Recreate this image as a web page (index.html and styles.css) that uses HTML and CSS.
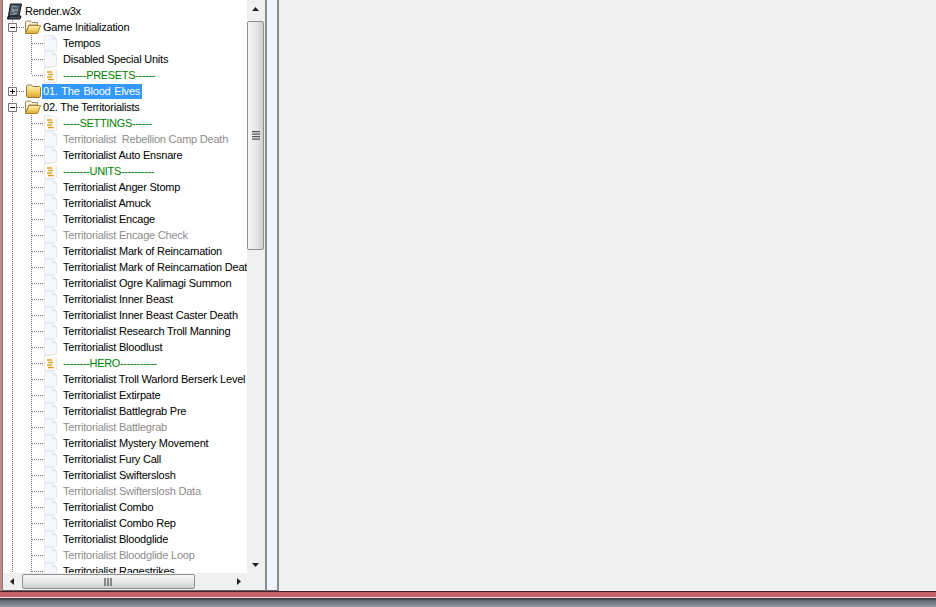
FILE: index.html
```html
<!DOCTYPE html>
<html lang="en">
<head>
<meta charset="utf-8">
<title>Render.w3x</title>
<link rel="stylesheet" href="styles.css">
</head>
<body>
<svg class="defs" width="0" height="0" aria-hidden="true">
  <defs>
    <linearGradient id="gold" x1="0" y1="0" x2="0" y2="1"><stop offset="0" stop-color="#fdf3bd"/><stop offset=".5" stop-color="#f4d467"/><stop offset="1" stop-color="#d9a42a"/></linearGradient>
  </defs>
  <symbol id="doc" viewBox="0 0 15 16"><path d="M.5 .5H9L12.500 4V15.500H.5Z" fill="#f6f8fc" stroke="#e6eaf1"/><path d="M9 .5V4H12.500" fill="#e9edf4" stroke="#dde2ea"/></symbol>
  <symbol id="note" viewBox="0 0 15 16"><path d="M.5 .5H9L12.500 4V15.500H.5Z" fill="#fdfdf8" stroke="#e6e8ec"/><path d="M3 5H8M4 7.500H9M3 10H8M4 12.500H10" stroke="#d9a520" stroke-width="1.400" fill="none"/></symbol>
  <symbol id="folder" viewBox="0 0 18 16"><path d="M2.500 4V3L3.500 2H7.500L9 3.500H15.500L16.500 4.500V13.500L15.500 14.500H3.500L2.500 13.500Z" fill="url(#gold)" stroke="#8f7a42"/></symbol>
  <symbol id="folder-open" viewBox="0 0 18 16"><path d="M1.500 14V3L2.500 2H6.500L8 3.500H13.500V6H5L1.500 14Z" fill="#f6f1de" stroke="#9c8a58"/><path d="M5 6.500H16.500L13.500 14.500H1.500Z" fill="url(#gold)" stroke="#a6852f"/></symbol>
  <symbol id="minus" viewBox="0 0 9 9"><path d="M.5 .5H8.500V8.500H.5Z" fill="#fff" stroke="#777"/><path d="M2 4.500H7" stroke="#000"/></symbol>
  <symbol id="plus" viewBox="0 0 9 9"><path d="M.5 .5H8.500V8.500H.5Z" fill="#fff" stroke="#777"/><path d="M2 4.500H7M4.500 2V7" stroke="#000"/></symbol>
  <symbol id="map" viewBox="0 0 17 17"><path d="M4.500 1H15.500L13 13H15L14 16H1.500L2.500 12.500Z" fill="#4a5560" stroke="#111"/><path d="M5.500 3L12 4M5 6L11.500 8M4.500 9L12 6M4 12L11 10M6 4L9 12" stroke="#98a4ac" stroke-width=".9" fill="none"/><path d="M1.500 16L3 13H12.500" stroke="#000" fill="none"/></symbol>
</svg>
<div class="main">
  <div class="edge"></div>
  <div class="pane">
    <div class="view">
      <div class="tree">
        <div class="row root"><svg class="i-map"><use href="#map"/></svg><span class="t">Render.w3x</span></div>
        <div class="row cat"><svg class="exp"><use href="#minus"/></svg><svg class="i-folder"><use href="#folder-open"/></svg><span class="t">Game Initialization</span></div>
        <div class="row leaf"><svg class="i-leaf"><use href="#doc"/></svg><span class="t">Tempos</span></div>
        <div class="row leaf"><svg class="i-leaf"><use href="#doc"/></svg><span class="t">Disabled Special Units</span></div>
        <div class="row leaf last"><svg class="i-leaf"><use href="#note"/></svg><span class="t green">-------PRESETS------</span></div>
        <div class="row cat closed"><svg class="exp"><use href="#plus"/></svg><svg class="i-folder"><use href="#folder"/></svg><span class="t sel">01. The Blood Elves</span></div>
        <div class="row cat"><svg class="exp"><use href="#minus"/></svg><svg class="i-folder"><use href="#folder-open"/></svg><span class="t">02. The Territorialists</span></div>
        <div class="row leaf"><svg class="i-leaf"><use href="#note"/></svg><span class="t green">-----SETTINGS------</span></div>
        <div class="row leaf"><svg class="i-leaf"><use href="#doc"/></svg><span class="t off">Territorialist&nbsp; Rebellion Camp Death</span></div>
        <div class="row leaf"><svg class="i-leaf"><use href="#doc"/></svg><span class="t">Territorialist Auto Ensnare</span></div>
        <div class="row leaf"><svg class="i-leaf"><use href="#note"/></svg><span class="t green">--------UNITS----------</span></div>
        <div class="row leaf"><svg class="i-leaf"><use href="#doc"/></svg><span class="t">Territorialist Anger Stomp</span></div>
        <div class="row leaf"><svg class="i-leaf"><use href="#doc"/></svg><span class="t">Territorialist Amuck</span></div>
        <div class="row leaf"><svg class="i-leaf"><use href="#doc"/></svg><span class="t">Territorialist Encage</span></div>
        <div class="row leaf"><svg class="i-leaf"><use href="#doc"/></svg><span class="t off">Territorialist Encage Check</span></div>
        <div class="row leaf"><svg class="i-leaf"><use href="#doc"/></svg><span class="t">Territorialist Mark of Reincarnation</span></div>
        <div class="row leaf"><svg class="i-leaf"><use href="#doc"/></svg><span class="t">Territorialist Mark of Reincarnation Death</span></div>
        <div class="row leaf"><svg class="i-leaf"><use href="#doc"/></svg><span class="t">Territorialist Ogre Kalimagi Summon</span></div>
        <div class="row leaf"><svg class="i-leaf"><use href="#doc"/></svg><span class="t">Territorialist Inner Beast</span></div>
        <div class="row leaf"><svg class="i-leaf"><use href="#doc"/></svg><span class="t">Territorialist Inner Beast Caster Death</span></div>
        <div class="row leaf"><svg class="i-leaf"><use href="#doc"/></svg><span class="t">Territorialist Research Troll Manning</span></div>
        <div class="row leaf"><svg class="i-leaf"><use href="#doc"/></svg><span class="t">Territorialist Bloodlust</span></div>
        <div class="row leaf"><svg class="i-leaf"><use href="#note"/></svg><span class="t green">--------HERO-----------</span></div>
        <div class="row leaf"><svg class="i-leaf"><use href="#doc"/></svg><span class="t">Territorialist Troll Warlord Berserk Level</span></div>
        <div class="row leaf"><svg class="i-leaf"><use href="#doc"/></svg><span class="t">Territorialist Extirpate</span></div>
        <div class="row leaf"><svg class="i-leaf"><use href="#doc"/></svg><span class="t">Territorialist Battlegrab Pre</span></div>
        <div class="row leaf"><svg class="i-leaf"><use href="#doc"/></svg><span class="t off">Territorialist Battlegrab</span></div>
        <div class="row leaf"><svg class="i-leaf"><use href="#doc"/></svg><span class="t">Territorialist Mystery Movement</span></div>
        <div class="row leaf"><svg class="i-leaf"><use href="#doc"/></svg><span class="t">Territorialist Fury Call</span></div>
        <div class="row leaf"><svg class="i-leaf"><use href="#doc"/></svg><span class="t">Territorialist Swifterslosh</span></div>
        <div class="row leaf"><svg class="i-leaf"><use href="#doc"/></svg><span class="t off">Territorialist Swifterslosh Data</span></div>
        <div class="row leaf"><svg class="i-leaf"><use href="#doc"/></svg><span class="t">Territorialist Combo</span></div>
        <div class="row leaf"><svg class="i-leaf"><use href="#doc"/></svg><span class="t">Territorialist Combo Rep</span></div>
        <div class="row leaf"><svg class="i-leaf"><use href="#doc"/></svg><span class="t">Territorialist Bloodglide</span></div>
        <div class="row leaf"><svg class="i-leaf"><use href="#doc"/></svg><span class="t off">Territorialist Bloodglide Loop</span></div>
        <div class="row leaf"><svg class="i-leaf"><use href="#doc"/></svg><span class="t">Territorialist Ragestrikes</span></div>
      </div>
    </div>
    <div class="vbar">
      <svg class="arrow" viewBox="0 0 17 17"><path d="M5 11L8.500 7L12 11Z" fill="#222"/></svg>
      <div class="vthumb"><svg class="grip-v" viewBox="0 0 8 9"><path d="M0 .7H8M0 3.200H8M0 5.700H8M0 8.200H8" stroke="#555" stroke-width="1.200"/></svg></div>
      <div class="grow"></div>
      <svg class="arrow" viewBox="0 0 17 17"><path d="M5 7L8.500 11L12 7Z" fill="#222"/></svg>
    </div>
    <div class="hbar">
      <svg class="arrow" viewBox="0 0 17 17"><path d="M11 5L7 8.500L11 12Z" fill="#222"/></svg>
      <div class="hthumb"><svg class="grip-h" viewBox="0 0 9 8"><path d="M1 0V8M4 0V8M7 0V8" stroke="#555" stroke-width="1.300"/></svg></div>
      <div class="grow"></div>
      <svg class="arrow" viewBox="0 0 17 17"><path d="M7 5L11 8.500L7 12Z" fill="#222"/></svg>
    </div>
    <div class="corner"></div>
  </div>
  <div class="split"></div>
  <div class="content"></div>
</div>
<div class="frame">
  <div class="frame-red"></div>
  <div class="frame-shadow"></div>
</div>
</body>
</html>
```
FILE: styles.css
```css
* { box-sizing: border-box; }
html, body { margin: 0; height: 100%; overflow: hidden; }
body {
  display: flex;
  flex-direction: column;
  width: 936px;
  height: 607px;
  background: #f0f0f0;
  font: 11px/16px "Liberation Sans", Arial, sans-serif;
  color: #000;
}
.defs { position: absolute; }
.main { flex: 1; display: flex; min-height: 0; }
.edge { width: 3px; background: linear-gradient(to right, #c98686 0 2px, #7d7d7d 2px); }
.pane {
  width: 262px;
  display: grid;
  grid-template-columns: 244px 18px;
  grid-template-rows: 573px 1fr;
  border-bottom: 1px solid #666;
}
.view { background: #fff; overflow: hidden; }
.tree { padding-top: 3px; margin-left: -3px; }
.row {
  height: 16px;
  display: flex;
  align-items: center;
  white-space: nowrap;
  background-repeat: no-repeat;
}
.row svg { flex: none; }
.t { padding: 0 1px; letter-spacing: -.22px; }
.root { padding-left: 6px; }
.i-map { width: 17px; height: 17px; margin-right: 1px; }
.cat, .leaf, .root {
  --v: repeating-linear-gradient(to bottom, #777 0 1px, transparent 1px 2px);
  --h: repeating-linear-gradient(to right, #777 0 1px, transparent 1px 2px);
}
.root { background-image: var(--v); background-size: 1px 8px; background-position: 12px 8px; }
.cat {
  padding-left: 8px;
  background-image: var(--v), var(--h), var(--v);
  background-size: 1px 16px, 7px 1px, 1px 8px;
  background-position: 12px 0, 17px 8px, 31px 8px;
}
.cat.closed { background-image: var(--v), var(--h); background-size: 1px 16px, 7px 1px; background-position: 12px 0, 17px 8px; }
.exp { width: 9px; height: 9px; margin-right: 7px; }
.i-folder { width: 18px; height: 16px; }
.leaf {
  padding-left: 44px;
  background-image: var(--v), var(--v), var(--h);
  background-size: 1px 16px, 1px 16px, 12px 1px;
  background-position: 12px 0, 31px 0, 32px 8px;
}
.leaf.last { background-size: 1px 16px, 1px 8px, 12px 1px; }
.i-leaf { width: 15px; height: 16px; margin-right: 3px; }
.sel {
  background: #3399ff;
  color: #fff;
  height: 15px;
  padding: 0 2px 0 1px;
  line-height: 15px;
  word-spacing: 1px;
}
.green { color: #008000; letter-spacing: -.34px; }
.off { color: #8c8c8c; }
.vbar { display: flex; flex-direction: column; background: #f0f0f0; }
.hbar { display: flex; align-items: stretch; background: #f0f0f0; }
.arrow { width: 17px; height: 17px; flex: none; }
.grow { flex: 1; }
.vthumb {
  height: 229px;
  margin: 4px 1px 0 0;
  display: flex;
  align-items: center;
  justify-content: center;
  border: 1px solid #8f8f8f;
  border-radius: 2px;
  background: linear-gradient(to right, #f6f6f6, #e8e8e8 50%, #cfcfcf);
}
.hthumb {
  width: 173px;
  margin: 1px 0 1px 2px;
  display: flex;
  align-items: center;
  justify-content: center;
  border: 1px solid #8f8f8f;
  border-radius: 2px;
  background: linear-gradient(to bottom, #f6f6f6, #e8e8e8 50%, #cfcfcf);
}
.grip-v { width: 8px; height: 9px; }
.grip-h { width: 9px; height: 8px; }
.corner { background: #f0f0f0; }
.split {
  width: 14px;
  background: #f2f6fc;
  border-left: 2px solid #8a8a8a;
  border-right: 2px solid #8a8a8a;
  border-bottom: 1px solid #666;
}
.content { flex: 1; background: #f0f0f0; }
.frame { flex: none; height: 16px; display: flex; flex-direction: column; }
.frame-red {
  height: 7px;
  background: #c4646a;
  border-top: 1px solid #4a1e22;
  border-bottom: 1px solid #f6dcdc;
}
.frame-shadow { flex: 1; background: linear-gradient(to bottom, #333, #6a6f78 35%, #949aa6); }
```
